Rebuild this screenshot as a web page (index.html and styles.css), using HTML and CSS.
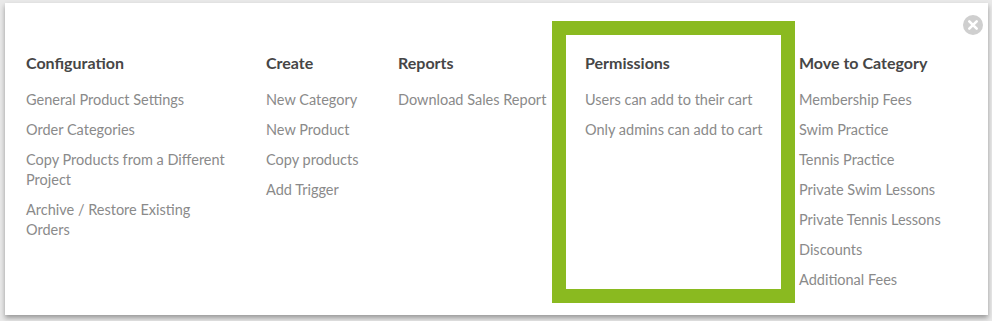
FILE: index.html
```html
<!DOCTYPE html>
<html lang="en">
<head>
  <meta charset="UTF-8">
  <title>Product Actions</title>
  <link rel="stylesheet" href="styles.css">
</head>
<body>

  <!-- Menu de ações -->
  <div class="painel">
    <button class="fechar" type="button" aria-label="Close">
      <svg width="20" height="20" viewBox="0 0 20 20">
        <circle cx="10" cy="10" r="10" fill="#cfcfcf"/>
        <path d="M6.3 6.3 L13.7 13.7 M13.7 6.3 L6.3 13.7" stroke="#fff" stroke-width="2.6" stroke-linecap="round"/>
      </svg>
    </button>

    <div class="colunas">
      <div class="coluna col-config">
        <h3>Configuration</h3>
        <a href="#">General Product Settings</a>
        <a href="#">Order Categories</a>
        <a href="#">Copy Products from a Different Project</a>
        <a href="#">Archive / Restore Existing Orders</a>
      </div>

      <div class="coluna col-create">
        <h3>Create</h3>
        <a href="#">New Category</a>
        <a href="#">New Product</a>
        <a href="#">Copy products</a>
        <a href="#">Add Trigger</a>
      </div>

      <div class="coluna col-reports">
        <h3>Reports</h3>
        <a href="#">Download Sales Report</a>
      </div>

      <div class="coluna col-permissoes">
        <h3>Permissions</h3>
        <a href="#">Users can add to their cart</a>
        <a href="#">Only admins can add to cart</a>
      </div>

      <div class="coluna col-mover">
        <h3>Move to Category</h3>
        <a href="#">Membership Fees</a>
        <a href="#">Swim Practice</a>
        <a href="#">Tennis Practice</a>
        <a href="#">Private Swim Lessons</a>
        <a href="#">Private Tennis Lessons</a>
        <a href="#">Discounts</a>
        <a href="#">Additional Fees</a>
      </div>
    </div>
  </div>

</body>
</html>
```

FILE: styles.css
```css
body {
  font-family: 'Lato', 'Open Sans', sans-serif;
  background: #e9e9e9;
  margin: 0;
  padding: 3px 4px 0 5px;
  height: 321px;
  box-sizing: border-box;
  overflow: hidden;
}

/* Painel branco do menu */
.painel {
  position: relative;
  background: #fff;
  padding: 50px 0 25px 16px;
  box-shadow: 0 3px 5px rgba(0, 0, 0, 0.35);
}

.fechar {
  position: absolute;
  top: 12px;
  right: 5px;
  padding: 0;
  border: none;
  background: none;
  cursor: pointer;
  line-height: 0;
}

.colunas {
  display: flex;
  align-items: stretch;
}

.coluna {
  display: flex;
  flex-direction: column;
  padding-left: 5px;
}

.coluna h3 {
  margin: 0 0 17px;
  font-size: 16px;
  line-height: 20px;
  font-weight: 700;
  color: #464646;
}

.coluna a {
  font-size: 14.5px;
  line-height: 20px;
  color: #8a8a8a;
  text-decoration: none;
  margin-bottom: 10px;
}

.coluna a:last-child {
  margin-bottom: 0;
}

.coluna a:hover {
  color: #555;
}

.col-config {
  width: 202px;
  margin-right: 33px;
}

.col-create {
  width: 127px;
}

.col-reports {
  width: 149px;
  margin-right: 5px;
}

/* Destaque verde em volta das permissões */
.col-permissoes {
  width: 196px;
  margin: -32px 0 -13px;
  padding: 18px 0 0 19px;
  border: 14px solid #8aba20;
}

.col-mover {
  padding-left: 4px;
}
```
